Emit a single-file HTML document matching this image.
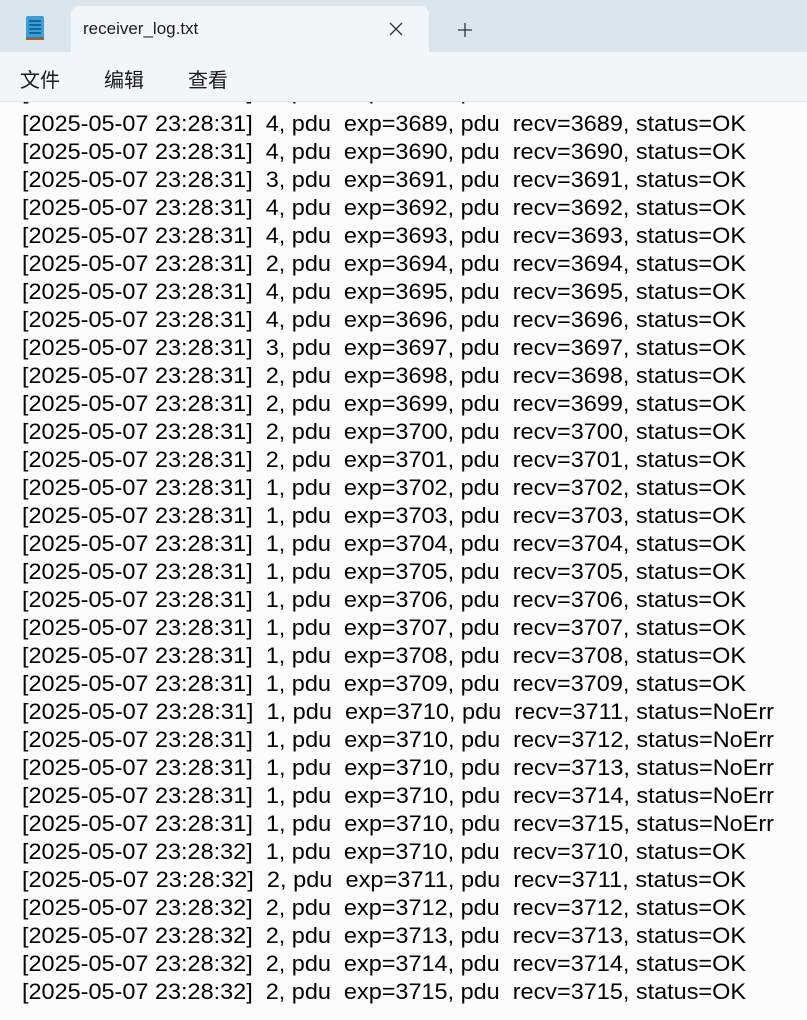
<!DOCTYPE html>
<html><head><meta charset="utf-8"><style>
html,body{margin:0;padding:0;width:807px;height:1020px;overflow:hidden;background:#fbfbfb;font-family:"Segoe UI","Liberation Sans","Noto Sans CJK SC",sans-serif}
.top{position:absolute;left:0;top:0;width:807px;height:52px;background:#dbe5ee}
.tab{position:absolute;left:71px;top:6px;width:358px;height:50px;background:#f3f6f9;border-radius:8px 8px 0 0}
.menu{position:absolute;left:0;top:52px;width:807px;height:49px;background:#f3f6f9;border-bottom:1px solid #e2e5e8}
.t{position:absolute;font-size:17px;color:#1b1b1b}
.m{position:absolute;top:64px;font-size:20px;color:#1b1b1b;font-family:"Noto Sans CJK SC",sans-serif}
svg{position:absolute;left:0;top:0}
text{white-space:pre}
</style></head><body>
<svg width="807" height="1020" font-family="Liberation Sans, sans-serif" font-size="22" fill="#000" xml:space="preserve">
<text x="22" y="99" textLength="724" lengthAdjust="spacingAndGlyphs">[2025-05-07 23:28:31]  4, pdu  exp=3688, pdu  recv=3688, status=OK</text>
<text x="22" y="131" textLength="724" lengthAdjust="spacingAndGlyphs">[2025-05-07 23:28:31]  4, pdu  exp=3689, pdu  recv=3689, status=OK</text>
<text x="22" y="159" textLength="724" lengthAdjust="spacingAndGlyphs">[2025-05-07 23:28:31]  4, pdu  exp=3690, pdu  recv=3690, status=OK</text>
<text x="22" y="187" textLength="724" lengthAdjust="spacingAndGlyphs">[2025-05-07 23:28:31]  3, pdu  exp=3691, pdu  recv=3691, status=OK</text>
<text x="22" y="215" textLength="724" lengthAdjust="spacingAndGlyphs">[2025-05-07 23:28:31]  4, pdu  exp=3692, pdu  recv=3692, status=OK</text>
<text x="22" y="243" textLength="724" lengthAdjust="spacingAndGlyphs">[2025-05-07 23:28:31]  4, pdu  exp=3693, pdu  recv=3693, status=OK</text>
<text x="22" y="271" textLength="724" lengthAdjust="spacingAndGlyphs">[2025-05-07 23:28:31]  2, pdu  exp=3694, pdu  recv=3694, status=OK</text>
<text x="22" y="299" textLength="724" lengthAdjust="spacingAndGlyphs">[2025-05-07 23:28:31]  4, pdu  exp=3695, pdu  recv=3695, status=OK</text>
<text x="22" y="327" textLength="724" lengthAdjust="spacingAndGlyphs">[2025-05-07 23:28:31]  4, pdu  exp=3696, pdu  recv=3696, status=OK</text>
<text x="22" y="355" textLength="724" lengthAdjust="spacingAndGlyphs">[2025-05-07 23:28:31]  3, pdu  exp=3697, pdu  recv=3697, status=OK</text>
<text x="22" y="383" textLength="724" lengthAdjust="spacingAndGlyphs">[2025-05-07 23:28:31]  2, pdu  exp=3698, pdu  recv=3698, status=OK</text>
<text x="22" y="411" textLength="724" lengthAdjust="spacingAndGlyphs">[2025-05-07 23:28:31]  2, pdu  exp=3699, pdu  recv=3699, status=OK</text>
<text x="22" y="439" textLength="724" lengthAdjust="spacingAndGlyphs">[2025-05-07 23:28:31]  2, pdu  exp=3700, pdu  recv=3700, status=OK</text>
<text x="22" y="467" textLength="724" lengthAdjust="spacingAndGlyphs">[2025-05-07 23:28:31]  2, pdu  exp=3701, pdu  recv=3701, status=OK</text>
<text x="22" y="495" textLength="724" lengthAdjust="spacingAndGlyphs">[2025-05-07 23:28:31]  1, pdu  exp=3702, pdu  recv=3702, status=OK</text>
<text x="22" y="523" textLength="724" lengthAdjust="spacingAndGlyphs">[2025-05-07 23:28:31]  1, pdu  exp=3703, pdu  recv=3703, status=OK</text>
<text x="22" y="551" textLength="724" lengthAdjust="spacingAndGlyphs">[2025-05-07 23:28:31]  1, pdu  exp=3704, pdu  recv=3704, status=OK</text>
<text x="22" y="579" textLength="724" lengthAdjust="spacingAndGlyphs">[2025-05-07 23:28:31]  1, pdu  exp=3705, pdu  recv=3705, status=OK</text>
<text x="22" y="607" textLength="724" lengthAdjust="spacingAndGlyphs">[2025-05-07 23:28:31]  1, pdu  exp=3706, pdu  recv=3706, status=OK</text>
<text x="22" y="635" textLength="724" lengthAdjust="spacingAndGlyphs">[2025-05-07 23:28:31]  1, pdu  exp=3707, pdu  recv=3707, status=OK</text>
<text x="22" y="663" textLength="724" lengthAdjust="spacingAndGlyphs">[2025-05-07 23:28:31]  1, pdu  exp=3708, pdu  recv=3708, status=OK</text>
<text x="22" y="691" textLength="724" lengthAdjust="spacingAndGlyphs">[2025-05-07 23:28:31]  1, pdu  exp=3709, pdu  recv=3709, status=OK</text>
<text x="22" y="719" textLength="752" lengthAdjust="spacingAndGlyphs">[2025-05-07 23:28:31]  1, pdu  exp=3710, pdu  recv=3711, status=NoErr</text>
<text x="22" y="747" textLength="752" lengthAdjust="spacingAndGlyphs">[2025-05-07 23:28:31]  1, pdu  exp=3710, pdu  recv=3712, status=NoErr</text>
<text x="22" y="775" textLength="752" lengthAdjust="spacingAndGlyphs">[2025-05-07 23:28:31]  1, pdu  exp=3710, pdu  recv=3713, status=NoErr</text>
<text x="22" y="803" textLength="752" lengthAdjust="spacingAndGlyphs">[2025-05-07 23:28:31]  1, pdu  exp=3710, pdu  recv=3714, status=NoErr</text>
<text x="22" y="831" textLength="752" lengthAdjust="spacingAndGlyphs">[2025-05-07 23:28:31]  1, pdu  exp=3710, pdu  recv=3715, status=NoErr</text>
<text x="22" y="859" textLength="724" lengthAdjust="spacingAndGlyphs">[2025-05-07 23:28:32]  1, pdu  exp=3710, pdu  recv=3710, status=OK</text>
<text x="22" y="887" textLength="724" lengthAdjust="spacingAndGlyphs">[2025-05-07 23:28:32]  2, pdu  exp=3711, pdu  recv=3711, status=OK</text>
<text x="22" y="915" textLength="724" lengthAdjust="spacingAndGlyphs">[2025-05-07 23:28:32]  2, pdu  exp=3712, pdu  recv=3712, status=OK</text>
<text x="22" y="943" textLength="724" lengthAdjust="spacingAndGlyphs">[2025-05-07 23:28:32]  2, pdu  exp=3713, pdu  recv=3713, status=OK</text>
<text x="22" y="971" textLength="724" lengthAdjust="spacingAndGlyphs">[2025-05-07 23:28:32]  2, pdu  exp=3714, pdu  recv=3714, status=OK</text>
<text x="22" y="999" textLength="724" lengthAdjust="spacingAndGlyphs">[2025-05-07 23:28:32]  2, pdu  exp=3715, pdu  recv=3715, status=OK</text>
</svg>
<div class="top"></div>
<div class="tab"></div>
<div class="menu"></div>
<svg width="40" height="40" style="left:20px;top:12px">
<rect x="6" y="4" width="18" height="22" rx="2" fill="#3a9fd8"/>
<rect x="6" y="25" width="18" height="3" fill="#b85a1e"/>
<g stroke="#0b4f7c" stroke-width="1.4"><line x1="9" y1="9" x2="21" y2="9"/><line x1="9" y1="13" x2="21" y2="13"/><line x1="9" y1="17" x2="21" y2="17"/><line x1="9" y1="21" x2="21" y2="21"/></g>
</svg>
<div class="t" style="left:83px;top:19px">receiver_log.txt</div>
<svg width="20" height="20" style="left:387px;top:20px"><path d="M3 3L15 15M15 3L3 15" stroke="#333" stroke-width="1.3"/></svg>
<svg width="20" height="20" style="left:456px;top:21px"><path d="M9 2V16M2 9H16" stroke="#333" stroke-width="1.3"/></svg>
<div class="m" style="left:20px">文件</div>
<div class="m" style="left:104px">编辑</div>
<div class="m" style="left:188px">查看</div>
</body></html>
